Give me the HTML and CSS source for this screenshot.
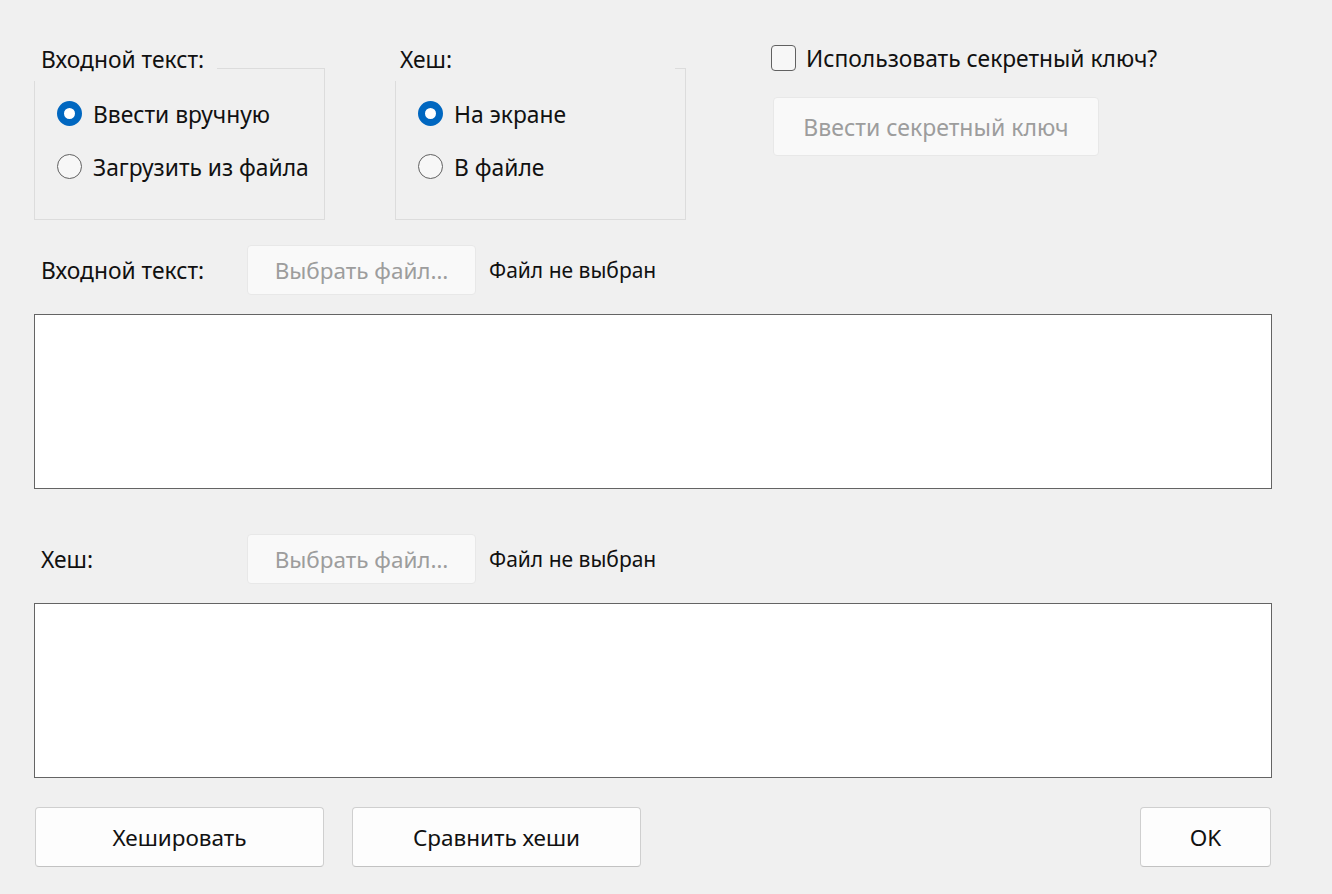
FILE: index.html
```html
<!DOCTYPE html>
<html lang="ru">
<head>
<meta charset="utf-8">
<title>Хеш</title>
<link rel="stylesheet" href="styles.css">
</head>
<body>
<div class="dialog">
  <div class="top">
    <div class="group group-input">
      <div class="group-title">Входной текст:</div>
      <label class="radio"><span class="radio-mark checked"></span><span>Ввести вручную</span></label>
      <label class="radio"><span class="radio-mark"></span><span>Загрузить из файла</span></label>
    </div>
    <div class="group group-hash">
      <div class="group-title wide">Хеш:</div>
      <label class="radio"><span class="radio-mark checked"></span><span>На экране</span></label>
      <label class="radio"><span class="radio-mark"></span><span>В файле</span></label>
    </div>
    <div class="key-col">
      <label class="check"><span class="check-mark"></span><span>Использовать секретный ключ?</span></label>
      <button class="btn disabled key-btn">Ввести секретный ключ</button>
    </div>
  </div>

  <div class="file-row first">
    <span class="row-label">Входной текст:</span>
    <button class="btn disabled file-btn">Выбрать файл…</button>
    <span class="file-status">Файл не выбран</span>
  </div>
  <div class="text-area"></div>

  <div class="file-row second">
    <span class="row-label">Хеш:</span>
    <button class="btn disabled file-btn">Выбрать файл…</button>
    <span class="file-status">Файл не выбран</span>
  </div>
  <div class="text-area"></div>

  <div class="actions">
    <button class="btn action">Хешировать</button>
    <button class="btn action">Сравнить хеши</button>
    <span class="spacer"></span>
    <button class="btn action ok">OK</button>
  </div>
</div>
</body>
</html>
```
FILE: styles.css
```css
html, body {
  margin: 0;
  padding: 0;
  background: #f0f0f0;
}
body {
  width: 1332px;
  height: 894px;
  overflow: hidden;
  font-family: "Noto Sans", "Open Sans", sans-serif;
  font-size: 22.8px;
  color: #111;
}
.dialog {
  padding: 45px 0 0 34px;
  width: 1238px;
}
.top {
  display: flex;
  align-items: flex-start;
}
.group {
  position: relative;
  box-sizing: border-box;
  width: 291px;
  height: 152px;
  margin-top: 23px;
  border: 1px solid #dcdcdc;
  padding: 32px 0 0 22px;
  display: flex;
  flex-direction: column;
  gap: 28px;
}
.group-hash {
  margin-left: 70px;
}
.group-title {
  position: absolute;
  left: -1px;
  top: -21px;
  width: 183px;
  height: 33px;
  box-sizing: border-box;
  padding-left: 7px;
  line-height: 24px;
  background: #f0f0f0;
}
.group-title.wide {
  width: 280px;
  padding-left: 5px;
}
.radio {
  display: flex;
  align-items: center;
  gap: 11px;
  height: 25px;
  line-height: 25px;
}
.radio span:last-child {
  position: relative;
  top: 1px;
}
.radio-mark {
  box-sizing: border-box;
  width: 25px;
  height: 25px;
  border-radius: 50%;
  border: 1.5px solid #616161;
  background: #f7f7f7;
  flex: none;
}
.radio-mark.checked {
  border: 7.5px solid #0067c0;
  background: #ffffff;
}
.key-col {
  margin-left: 85px;
  display: flex;
  flex-direction: column;
}
.check {
  display: flex;
  align-items: center;
  gap: 10px;
  height: 26px;
}
.check-mark {
  box-sizing: border-box;
  width: 25px;
  height: 26px;
  border: 1.5px solid #616161;
  border-radius: 4px;
  background: #f7f7f7;
}
.btn {
  font-family: inherit;
  font-size: 22.5px;
  box-sizing: border-box;
  border: 1px solid #cfcfcf;
  border-bottom-color: #c2c2c2;
  border-radius: 4px;
  background: #fdfdfd;
  color: #111;
  padding: 0;
  cursor: default;
}
.btn.disabled {
  background: #f9f9f9;
  border-color: #e8e8e8;
  color: #9d9d9d;
}
.key-btn {
  margin: 26px 0 0 2px;
  width: 326px;
  height: 59px;
  font-size: 23px;
}
.file-row {
  display: flex;
  align-items: center;
  height: 50px;
}
.file-row.first {
  margin-top: 25px;
}
.file-row.second {
  margin-top: 45px;
}
.row-label {
  width: 206px;
  padding-left: 7px;
}
.file-btn {
  width: 229px;
  height: 50px;
  font-size: 22.5px;
}
.file-status {
  margin-left: 13px;
  font-size: 21px;
}
.text-area {
  box-sizing: border-box;
  width: 1238px;
  height: 175px;
  margin-top: 19px;
  background: #fff;
  border: 1px solid #646464;
}
.actions {
  display: flex;
  margin-top: 29px;
  padding-left: 1px;
  gap: 28px;
}
.action {
  width: 289px;
  height: 60px;
}
.spacer {
  flex: 1;
}
.action.ok {
  width: 131px;
  margin-right: 1px;
}
```
